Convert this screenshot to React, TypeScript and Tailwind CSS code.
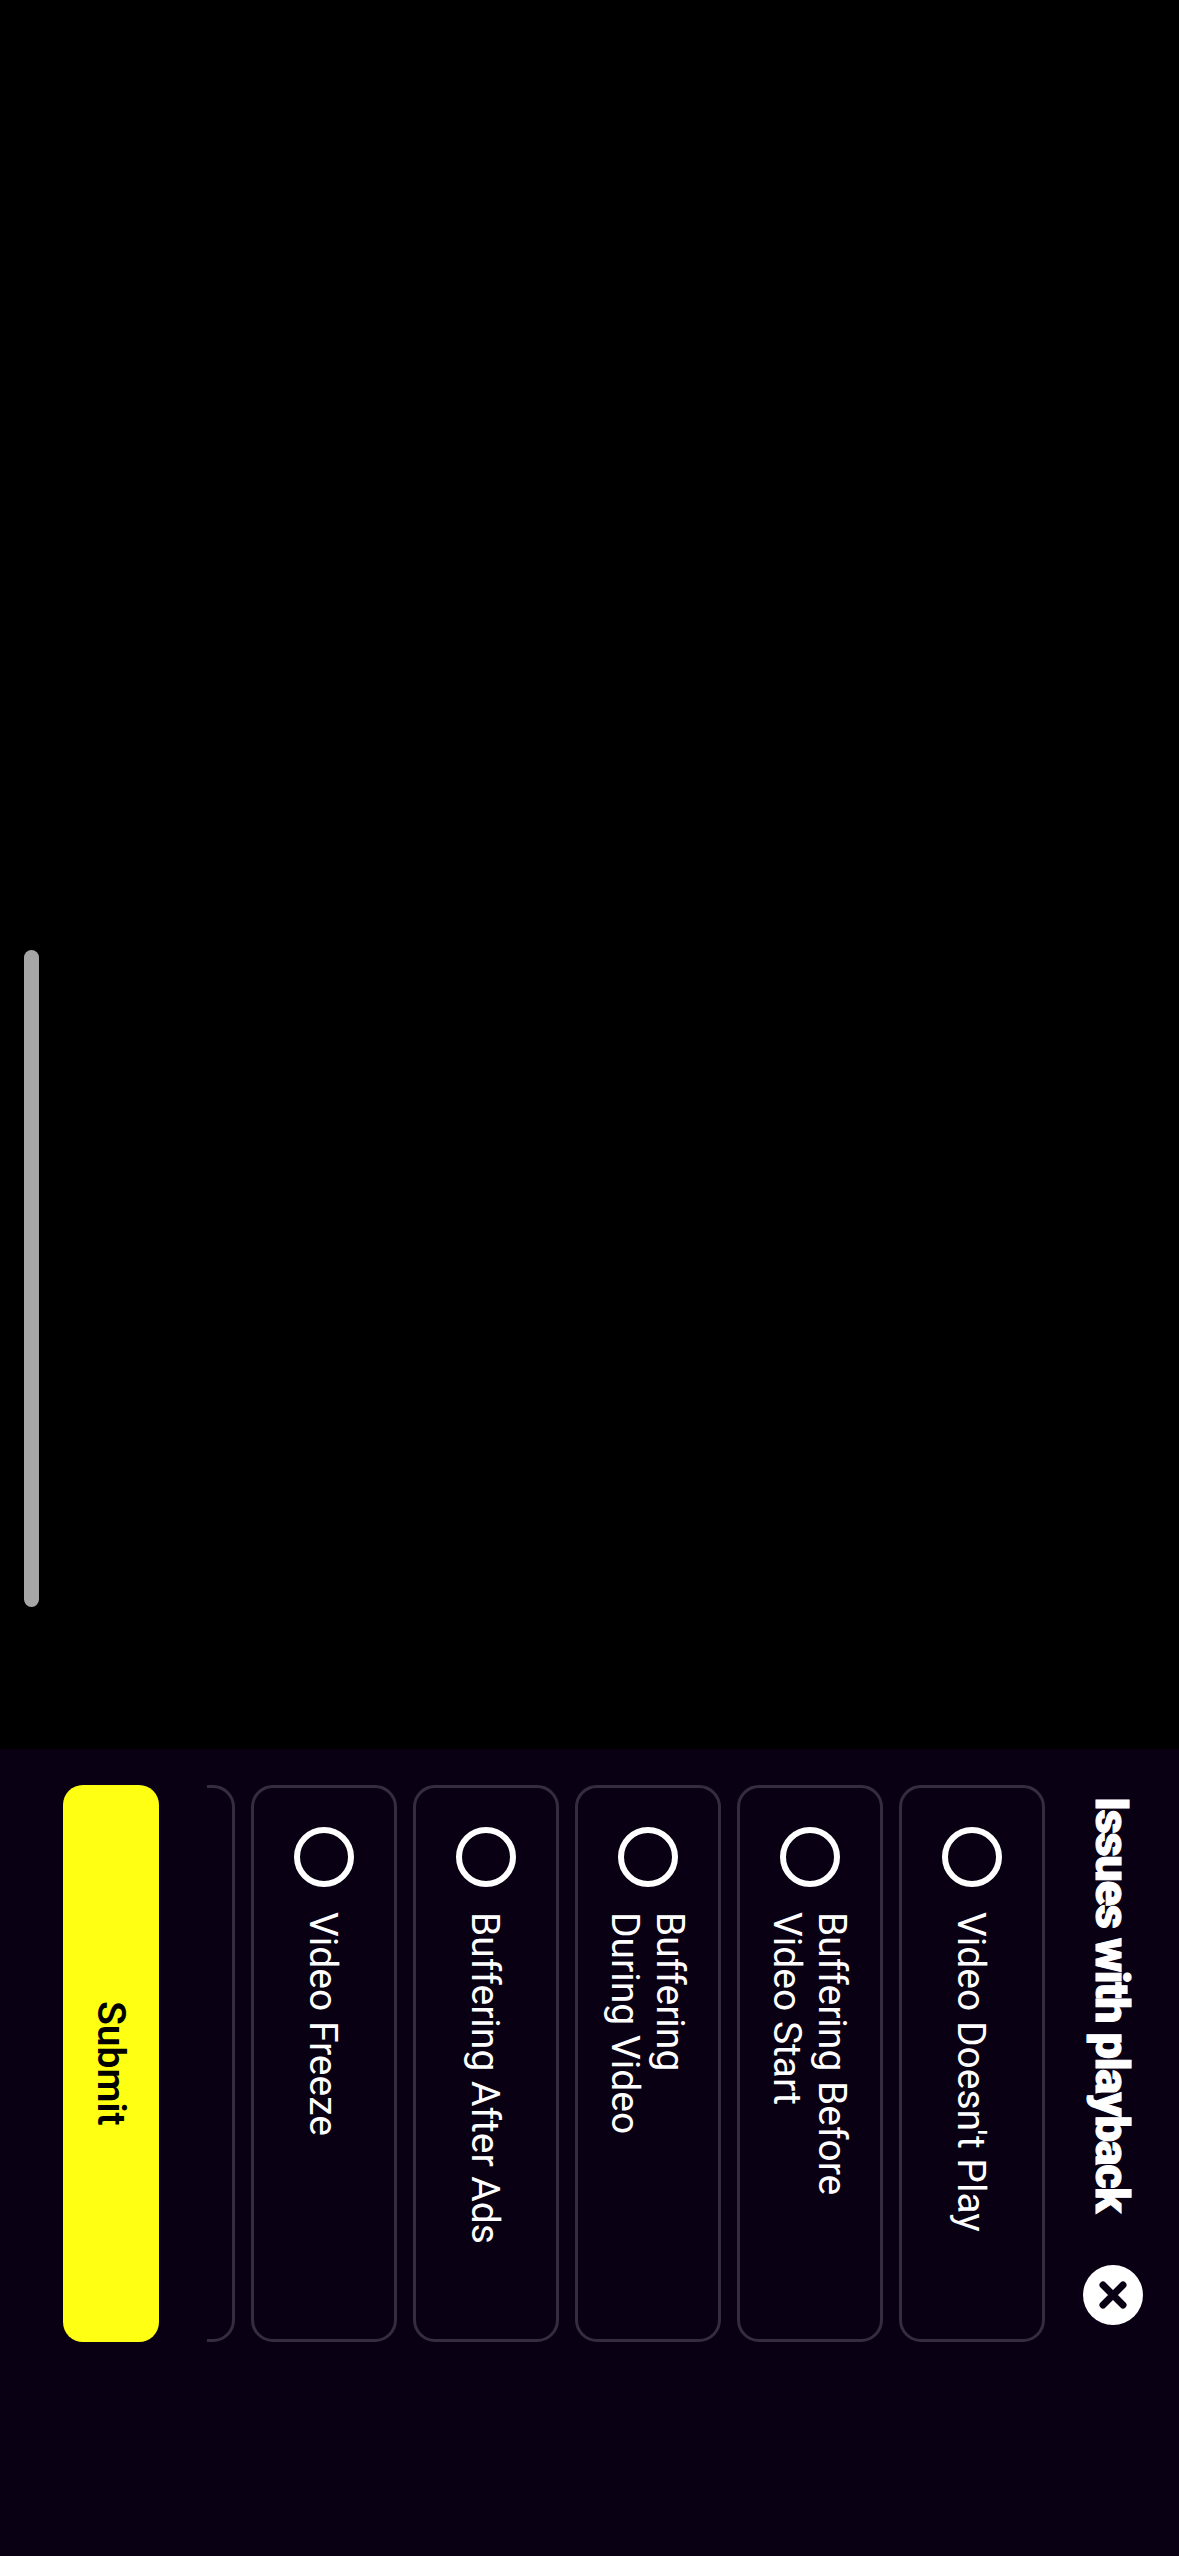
import React from "react";

const options: React.ReactNode[] = [
  <>Video Doesn't Play</>,
  <>Buffering Before<br />Video Start</>,
  <>Buffering<br />During Video</>,
  <>Buffering After Ads</>,
  <>Video Freeze</>,
];

function Card({ children }: { children?: React.ReactNode }) {
  return (
    <div className="w-[146px] h-[557px] shrink-0 box-border border-[3px] border-[#362c42] rounded-[22px] flex flex-row items-center pt-[39px]">
      {children && (
        <>
          <div className="w-[60px] h-[60px] shrink-0 box-border rounded-full border-[6px] border-white" />
          <div className="mt-[25px] mr-[3px] text-[39px] leading-[45px] text-white whitespace-nowrap">{children}</div>
        </>
      )}
    </div>
  );
}

export default function App() {
  return (
    <div className="relative w-[1179px] h-[2556px] bg-black flex flex-col overflow-hidden [font-family:Roboto,sans-serif]">
      <div className="flex-1" />
      <div className="absolute left-[24px] top-[950px] w-[15px] h-[657px] rounded-full bg-[#a6a6a6]" />
      <div className="h-[807px] shrink-0 bg-[#0a0014] flex flex-col pt-[36px] pr-[36px] [writing-mode:vertical-rl]">
        <div className="w-[60px] h-[557px] shrink-0 flex flex-row items-center justify-between">
          <div className="pt-[12px] mr-[2px] text-[47px] leading-[60px] font-black tracking-[-1.35px] [-webkit-text-stroke:1px_white] text-white whitespace-nowrap">
            Issues with playback
          </div>
          <button className="w-[60px] h-[60px] mb-[17px] rounded-full bg-white flex items-center justify-center">
            <svg width="34" height="34" viewBox="0 0 34 34" fill="none" stroke="#0a0014" strokeWidth="7" strokeLinecap="round">
              <path d="M7 7 L27 27 M27 7 L7 27" />
            </svg>
          </button>
        </div>
        <div className="w-[838px] h-[557px] mr-[38px] shrink-0 flex flex-col gap-[16px] overflow-hidden">
          {options.map((o, i) => (
            <Card key={i}>{o}</Card>
          ))}
          <Card />
        </div>
        <button className="w-[96px] h-[557px] shrink-0 mr-[48px] rounded-[20px] bg-[#ffff14] text-black text-[39px] font-semibold flex items-center justify-center">
          Submit
        </button>
      </div>
    </div>
  );
}
